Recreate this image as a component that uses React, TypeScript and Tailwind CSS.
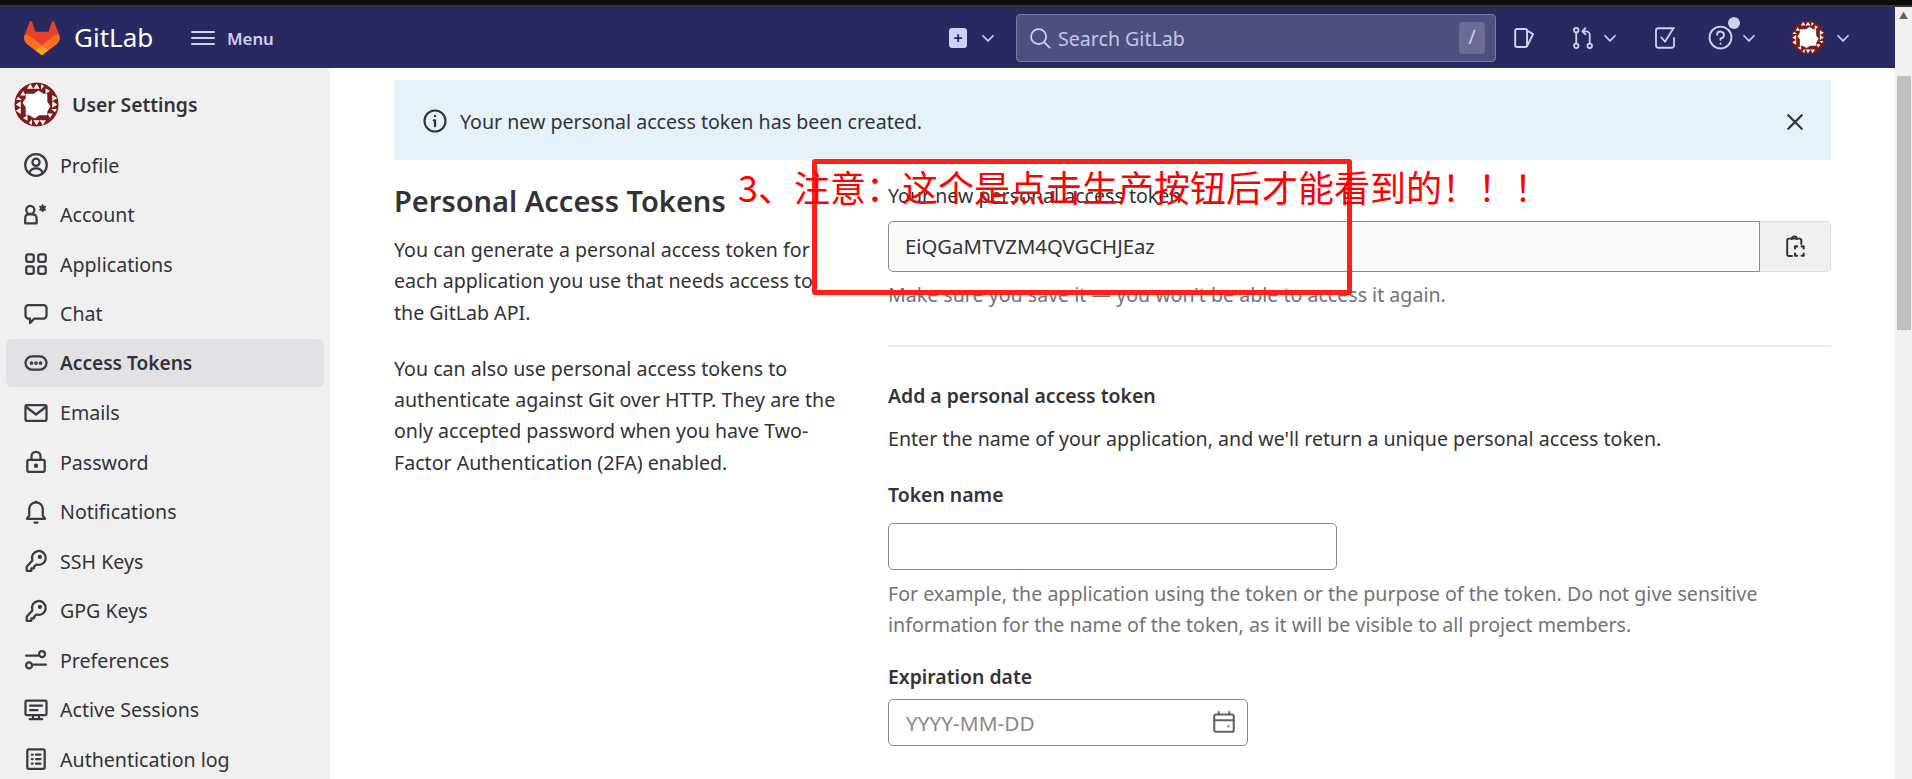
import React from "react";

const F = '"Noto Sans","Noto Sans CJK SC",sans-serif';

function I({ s = 24, c = "", children }: { s?: number; c?: string; children: React.ReactNode }) {
  return (
    <svg width={s} height={s} viewBox="0 0 16 16" fill="none" stroke="currentColor" strokeWidth="1.5" strokeLinecap="round" strokeLinejoin="round" className={"shrink-0 " + c}>
      {children}
    </svg>
  );
}

function Avatar({ w, h }: { w: number; h: number }) {
  return (
    <svg width={w} height={h} viewBox="0 0 100 100" className="shrink-0">
      <circle cx="50" cy="50" r="49" fill="#7f1a1a" />
      {[0, 90, 180, 270].map((a) => (
        <g key={a} transform={`rotate(${a} 50 50)`}>
          <polygon points="36,4 43,15 29,15" fill="#fff" />
          <polygon points="50,4 57,15 43,15" fill="#fff" />
          <polygon points="60,5 67,9 60,17" fill="#fff" />
          <polygon points="14,30 26,30 20,20" fill="#fff" />
        </g>
      ))}
      <polygon points="26,26 44,26 54,19 66,26 74,26 74,44 81,54 74,66 74,74 56,74 46,81 34,74 26,74 26,56 19,46 26,36" fill="#fff" />
    </svg>
  );
}

const Chevron = ({ c = "" }: { c?: string }) => (
  <I s={18} c={c}><path d="M3.5 6l4.5 4.5L12.5 6" /></I>
);

const items: [string, React.ReactNode][] = [
  ["Profile", <><circle cx="8" cy="8" r="7.2" /><circle cx="8" cy="6.2" r="2.4" /><path d="M3.6 13.4c.5-2.4 2.2-3.2 4.4-3.2s3.9.8 4.4 3.2" /></>],
  ["Account", <><circle cx="4.2" cy="4.6" r="2.7" /><path d="M3 7.6h2.4c2 0 3 1.1 3 2.8v3.2H.8v-3.2c0-1.7.9-2.8 2.2-2.8z" /><path d="M12.4 1l.7 1.2h1.4l-.7 1.3.7 1.3h-1.4l-.7 1.2-.7-1.2h-1.4l.7-1.3-.7-1.3h1.4z" fill="currentColor" strokeWidth=".6" /></>],
  ["Applications", <><rect x="1.5" y="1.5" width="5" height="5" rx="1.4" /><rect x="9.5" y="1.5" width="5" height="5" rx="1.4" /><rect x="1.5" y="9.5" width="5" height="5" rx="1.4" /><rect x="9.5" y="9.5" width="5" height="5" rx="1.4" /></>],
  ["Chat", <path d="M3 2h10a2 2 0 0 1 2 2v5a2 2 0 0 1-2 2H7l-3 3v-3H3a2 2 0 0 1-2-2V4a2 2 0 0 1 2-2z" />],
  ["Access Tokens", <><rect x="1" y="3.6" width="14" height="8.8" rx="4.4" /><circle cx="5" cy="8" r=".5" fill="currentColor" /><circle cx="8" cy="8" r=".5" fill="currentColor" /><circle cx="11" cy="8" r=".5" fill="currentColor" /></>],
  ["Emails", <><rect x="1" y="2.8" width="14" height="10.4" rx="1" /><path d="M1.5 4l6.5 5 6.5-5" /></>],
  ["Password", <><rect x="2.2" y="6.5" width="11.6" height="8" rx="1" /><path d="M5 6.5V4.2a3 3 0 0 1 6 0v2.3" /><circle cx="8" cy="10.5" r=".7" fill="currentColor" /></>],
  ["Notifications", <><path d="M2 12.5h12l-1.5-2V6a4.5 4.5 0 0 0-9 0v4.5L2 12.5z" /><path d="M8 1v.5M7 15h2" /></>],
  ["SSH Keys", <><path d="M5.6 7.6a4.6 4.6 0 1 1 2.9 2.7l-1.8 1.4v1.2H4.9v1.6H1.8v-2.7z" /><circle cx="10.6" cy="5.2" r=".7" fill="currentColor" /></>],
  ["GPG Keys", <><path d="M5.6 7.6a4.6 4.6 0 1 1 2.9 2.7l-1.8 1.4v1.2H4.9v1.6H1.8v-2.7z" /><circle cx="10.6" cy="5.2" r=".7" fill="currentColor" /></>],
  ["Preferences", <><circle cx="12" cy="4" r="2" /><circle cx="3.4" cy="11.6" r="2" /><path d="M1.4 5h8M6.4 11h8.2" /></>],
  ["Active Sessions", <><rect x="1" y="1.8" width="14" height="9.6" rx=".8" /><path d="M4 5h8M4 8h5M6 11.5v2.2M10 11.5v2.2M3.8 14h8.4" /></>],
  ["Authentication log", <><rect x="2.2" y="1.5" width="11.6" height="13" rx="1" /><path d="M5.2 5h.6M8 5h3M5.2 8h.6M8 8h3M5.2 11h.6M8 11h3" /></>],
];

const Para = ({ children, c = "" }: { children: React.ReactNode; c?: string }) => (
  <p className={"text-[19.6px] leading-[31.3px] text-[#333238] " + c}>{children}</p>
);

export default function App() {
  return (
    <div className="relative h-[779px] w-[1912px] overflow-hidden bg-white" style={{ fontFamily: F }}>
      <div className="h-[7px] border-b-2 border-[#333333] bg-[#0c0c0c]" />
      <div className="flex h-[772px]">
        <div className="flex w-[1895px] flex-col">
          <header className="flex h-[61px] shrink-0 items-center bg-[#292961] text-[#d1d0f5]">
            <svg width="36" height="34" viewBox="0 0 25 24" className="ml-6 shrink-0">
              <path d="M24.507 9.5l-.034-.09L21.082.562a.896.896 0 00-1.694.091l-2.29 7.01H7.825L5.535.653a.898.898 0 00-1.694-.09L.451 9.411.416 9.5a6.297 6.297 0 002.09 7.278l.012.01.03.022 5.16 3.867 2.56 1.935 1.554 1.176a1.051 1.051 0 001.268 0l1.555-1.176 2.56-1.935 5.197-3.89.014-.01A6.297 6.297 0 0024.507 9.5z" fill="#E24329" />
              <path d="M24.507 9.5l-.034-.09a11.44 11.44 0 00-4.56 2.051l-7.447 5.632 4.742 3.584 5.197-3.89.014-.01A6.297 6.297 0 0024.507 9.5z" fill="#FC6D26" />
              <path d="M7.707 20.677l2.56 1.935 1.555 1.176a1.051 1.051 0 001.268 0l1.555-1.176 2.56-1.935-4.743-3.584-4.755 3.584z" fill="#FCA326" />
              <path d="M5.01 11.461a11.43 11.43 0 00-4.56-2.05L.416 9.5a6.297 6.297 0 002.09 7.278l.012.01.03.022 5.16 3.867 4.745-3.584-7.444-5.632z" fill="#FC6D26" />
            </svg>
            <span className="ml-[14px] w-[117px] text-[26px] text-white">GitLab</span>
            <svg width="24" height="16" viewBox="0 0 24 16" className="shrink-0" stroke="currentColor" strokeWidth="2" strokeLinecap="round"><path d="M1 2h22M1 8h22M1 14h22" /></svg>
            <span className="ml-3 mt-[2px] w-[722px] text-[16.8px] font-semibold">Menu</span>
            <span className="flex h-[20px] w-[18px] shrink-0 items-center justify-center rounded-[3px] bg-[#d1d0f5] text-[16px] font-bold leading-none text-[#292961]">+</span>
            <Chevron c="ml-[12px]" />
            <div className="ml-[19px] flex h-[48px] w-[480px] shrink-0 items-center rounded-[4px] border border-[#7b7ba6] bg-[#4f4f7f] pl-[12px] pr-[10px]">
              <svg width="22" height="22" viewBox="0 0 16 16" fill="none" stroke="currentColor" strokeWidth="1.3" strokeLinecap="round" className="shrink-0"><circle cx="7" cy="7" r="5.5" /><path d="M11 11l4 4" /></svg>
              <span className="ml-[7px] mt-[2px] flex-1 text-[19.6px] text-[#c5c4ea]">Search GitLab</span>
              <span className="flex h-[32px] w-[26px] items-center justify-center rounded-[4px] bg-[#6b6b96] text-[19px] text-[#d1d0f5]">/</span>
            </div>
            <I s={24} c="ml-[15px]"><path d="M4 2h5.5A1.2 1.2 0 0 1 10.7 3.2v9.6a1.2 1.2 0 0 1-1.2 1.2H4a1.2 1.2 0 0 1-1.2-1.2V3.2A1.2 1.2 0 0 1 4 2z" strokeWidth="1.3" /><path d="M10.7 3l4 2.4-4 8" strokeWidth="1.3" /></I>
            <I s={24} c="ml-[36px]"><circle cx="3.5" cy="2.8" r="1.5" strokeWidth="1.2" /><circle cx="3.5" cy="13.2" r="1.5" strokeWidth="1.2" /><circle cx="12.5" cy="13.2" r="1.5" strokeWidth="1.2" /><path d="M3.5 4.4v7.2M12.5 11.6V6a2.4 2.4 0 0 0-2.4-2.4H8M9.6 1.4L7.6 3.6l2 2" strokeWidth="1.2" /></I>
            <Chevron c="ml-[6px]" />
            <I s={24} c="ml-[34px]"><path d="M14 8v5a1.5 1.5 0 0 1-1.5 1.5h-9A1.5 1.5 0 0 1 2 13V3a1.5 1.5 0 0 1 1.5-1.5H14M5.5 7.5L8 10.5l5-8" strokeWidth="1.2" /></I>
            <div className="relative ml-[31px] shrink-0">
              <I s={25}><circle cx="8" cy="8" r="7" strokeWidth="1.2" /><path d="M5.8 6.2A2.2 2.2 0 1 1 8 8.6v.9M8 11.8v.2" strokeWidth="1.2" /></I>
              <span className="absolute right-[-7px] top-[-8px] h-[12px] w-[12px] rounded-full bg-[#d1d0f5]" />
            </div>
            <Chevron c="ml-[7px]" />
            <div className="ml-[33px] shrink-0"><Avatar w={34} h={35} /></div>
            <Chevron c="ml-[9px]" />
          </header>
          <div className="flex min-h-0 flex-1">
            <aside className="flex w-[330px] shrink-0 flex-col bg-[#f0f0f0] pl-[6px] pr-[6px] text-[#333238]">
              <div className="flex h-[73px] shrink-0 items-center pl-[8px]">
                <Avatar w={45} h={45} />
                <span className="ml-[13px] mt-[2px] text-[19.3px] font-semibold">User Settings</span>
              </div>
              <nav className="flex flex-col gap-[1.5px]">
                {items.map(([t, ic]) => (
                  <div key={t} className={"flex h-[48px] shrink-0 items-center rounded-[6px] pl-[18px] " + (t === "Access Tokens" ? "bg-[#e1e1e6] font-semibold" : "")}>
                    <I s={24} c="text-[#3a3a40]">{ic}</I>
                    <span className={"ml-[12px] mt-[1px] " + (t === "Access Tokens" ? "text-[19.1px]" : "text-[19.6px]")}>{t}</span>
                  </div>
                ))}
              </nav>
            </aside>
            <main className="min-w-0 flex-1 pl-[64px] pr-[64px] pt-[12px]">
              <div className="flex h-[80px] items-center justify-between bg-[#e6f2fb] pl-[29px] pr-[24px] pt-[3px]">
                <div className="flex items-center">
                  <I s={24} c="text-[#333238]"><circle cx="8" cy="8" r="7" strokeWidth="1.4" /><path d="M8 7.5v4M7.2 7.5H8M8 4.6v.2" strokeWidth="1.5" /></I>
                  <span className="ml-[13px] text-[19.6px] text-[#333238]">Your new personal access token has been created.</span>
                </div>
                <I s={24} c="text-[#333238]"><path d="M3.5 3.5l9 9M12.5 3.5l-9 9" /></I>
              </div>
              <div className="flex pt-[20px]">
                <div className="w-[494px] shrink-0 pr-[45px]">
                  <h1 className="mt-px text-[29px] font-semibold leading-[40px] text-[#333238]">Personal Access Tokens</h1>
                  <Para c="mt-[13px]">You can generate a personal access token for each application you use that needs access to the GitLab API.</Para>
                  <Para c="mt-[25px]">You can also use personal access tokens to authenticate against Git over HTTP. They are the only accepted password when you have Two-Factor Authentication (2FA) enabled.</Para>
                </div>
                <div className="min-w-0 flex-1">
                  <div className="text-[19.6px] leading-[31px] text-[#333238]">Your new personal access token</div>
                  <div className="mt-[10px] flex h-[51px]">
                    <div className="flex flex-1 items-center rounded-l-[5px] border border-[#89888d] bg-[#fafafa] pl-[16px] text-[20.3px] text-[#333238]">EiQGaMTVZM4QVGCHJEaz</div>
                    <div className="flex w-[71px] items-center justify-center rounded-r-[5px] border border-l-0 border-[#dcdcde] bg-[#f0f0f0] text-[#333238]">
                      <I s={24}><path d="M6 14H4a1.2 1.2 0 0 1-1.2-1.2V3.6A1.2 1.2 0 0 1 4 2.4h7a1.2 1.2 0 0 1 1.2 1.2V6" strokeWidth="1.3" /><path d="M5.8 2.6c0-2.2 3.4-2.2 3.4 0" strokeWidth="1.3" /><path d="M8 9V7.6h1.4M12.4 7.6h1.4V9M13.8 12.4v1.4h-1.4M9.4 13.8H8v-1.4" strokeWidth="1.4" /></I>
                    </div>
                  </div>
                  <div className="mt-[7px] text-[19.6px] leading-[31px] text-[#737278]">Make sure you save it — you won't be able to access it again.</div>
                  <hr className="mt-[35px] border-t-2 border-[#eeeeee]" />
                  <div className="mt-[33px] text-[19.4px] font-semibold leading-[31px] text-[#333238]">Add a personal access token</div>
                  <div className="mt-[12px] text-[19.6px] leading-[31px] text-[#333238]">Enter the name of your application, and we'll return a unique personal access token.</div>
                  <div className="mt-[25px] text-[19.4px] font-semibold leading-[31px] text-[#333238]">Token name</div>
                  <div className="mt-[13px] h-[47px] w-[449px] rounded-[5px] border border-[#89888d] bg-white" />
                  <Para c="mt-[8px] !text-[#737278]">For example, the application using the token or the purpose of the token. Do not give sensitive information for the name of the token, as it will be visible to all project members.</Para>
                  <div className="mt-[20px] text-[19.4px] font-semibold leading-[31px] text-[#333238]">Expiration date</div>
                  <div className="mt-[7px] flex h-[47px] w-[360px] items-center justify-between rounded-[5px] border border-[#89888d] bg-white pl-[17px] pr-[11px]">
                    <span className="mt-[2px] text-[20.8px] text-[#89888d]">YYYY-MM-DD</span>
                    <I s={24} c="text-[#626168]"><rect x="1.5" y="3" width="13" height="11.5" rx="1.2" strokeWidth="1.4" /><path d="M1.5 6.8h13M4.5 1.4V3M11.5 1.4V3M11 10.8v.1" strokeWidth="1.4" /></I>
                  </div>
                </div>
              </div>
            </main>
          </div>
        </div>
        <div className="relative w-[17px] shrink-0 bg-[#f0f0f0]">
          <div className="flex h-[17px] items-center justify-center text-[9px] leading-none text-[#606060]">▲</div>
          <div className="absolute left-[2px] top-[69px] h-[254px] w-[14px] bg-[#c0c0c0]" />
        </div>
      </div>
      <div className="absolute left-[812px] top-[159px] h-[136px] w-[540px] rounded-[3px] border-[5px] border-[#ff2016]" />
      <div className="absolute left-[738px] top-[159px] whitespace-nowrap text-[36px] leading-[54px] text-[#ff0000]" style={{ fontFamily: '"Noto Sans CJK SC",sans-serif' }}>3、注意：这个是点击生产按钮后才能看到的！！！</div>
    </div>
  );
}
